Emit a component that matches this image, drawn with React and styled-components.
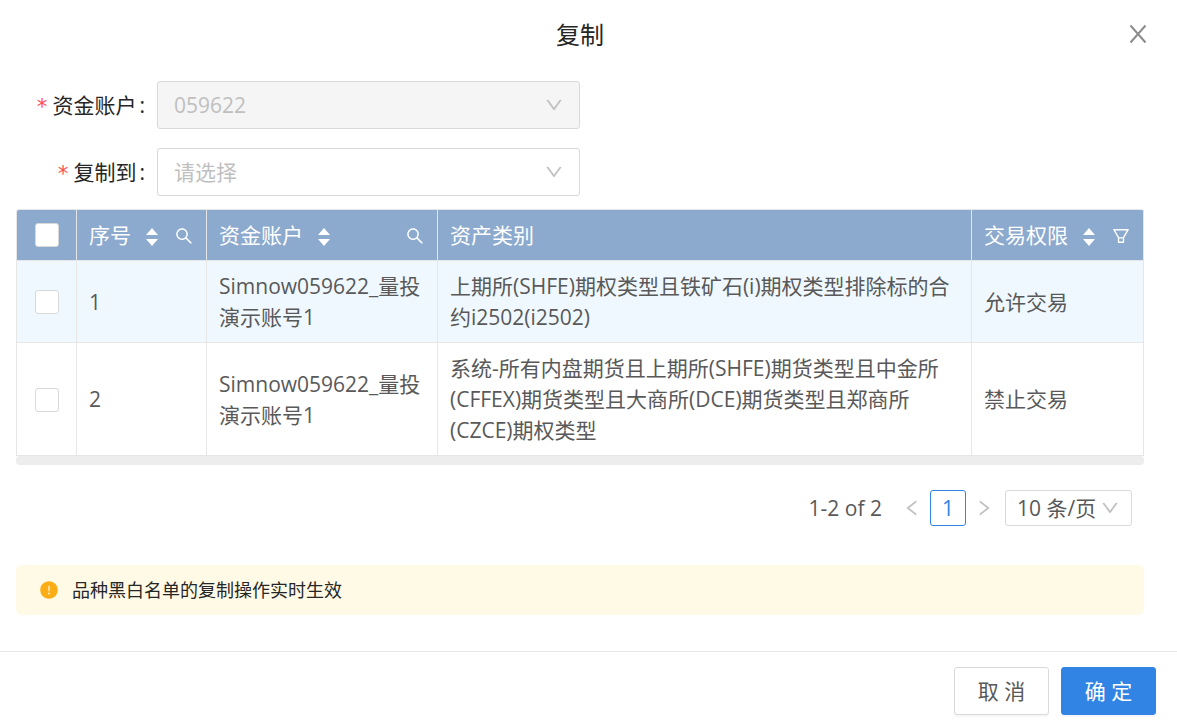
import { useState } from "react";
import styled, { createGlobalStyle } from "styled-components";
import {
  AiFillExclamationCircle,
  AiOutlineDown,
  AiOutlineFilter,
  AiOutlineLeft,
  AiOutlineRight,
  AiOutlineSearch,
} from "react-icons/ai";

const GlobalStyle = createGlobalStyle`
  * {
    box-sizing: border-box;
  }
  body {
    margin: 0;
    background: #fff;
    color: #595959;
    font-family: "Open Sans", "Noto Sans CJK SC", sans-serif;
    font-size: 21px;
    line-height: 31px;
  }
  button, select, input {
    font: inherit;
    color: inherit;
    margin: 0;
  }
`;

const Dialog = styled.div`
  position: relative;
  width: 100%;
`;

const Header = styled.header`
  display: flex;
  align-items: center;
  justify-content: center;
  height: 68px;
  padding: 0 33px 0 16px;
`;

const Title = styled.h1`
  margin: 0;
  font-size: 24px;
  font-weight: 400;
  color: #262626;
`;

const CloseButton = styled.button`
  position: absolute;
  top: 22px;
  right: 27px;
  display: flex;
  padding: 0;
  border: 0;
  background: none;
  color: #8c8c8c;
  cursor: pointer;
`;

const Body = styled.main`
  padding: 13px 33px 36px 16px;
`;

const Form = styled.form`
  display: flex;
  flex-direction: column;
  gap: 19px;
  margin-bottom: 13px;
`;

const FormItem = styled.div`
  display: grid;
  grid-template-columns: 12.5% 37.5%;
  align-items: center;
`;

const Label = styled.label`
  display: flex;
  align-items: center;
  justify-content: flex-end;
  color: #262626;
  white-space: nowrap;
`;

const Required = styled.span`
  margin-right: 4px;
  padding-top: 5px;
  color: #ff4d4f;
  font-family: "DejaVu Sans Mono", monospace;
`;

const Colon = styled.span`
  margin: 0 12px 0 3px;
`;

const SelectBox = styled.div`
  position: relative;
  height: ${(p) => (p.$small ? 36 : 48)}px;
  width: ${(p) => (p.$small ? "127px" : "100%")};
  svg {
    position: absolute;
    top: 50%;
    right: ${(p) => (p.$small ? 12 : 16)}px;
    transform: translateY(-50%);
    color: #bfbfbf;
    font-size: 20px;
    stroke-width: 14px;
    pointer-events: none;
  }
`;

const Select = styled.select`
  appearance: none;
  width: 100%;
  height: 100%;
  padding: 0 ${(p) => (p.$small ? 11 : 16)}px;
  border: 1px solid #d9d9d9;
  border-radius: 3px;
  background: #fff;
  color: ${(p) => (p.$placeholder ? "#bfbfbf" : "#595959")};
  cursor: pointer;
  &:disabled {
    background: #f5f5f5;
    color: #bfbfbf;
    opacity: 1;
    cursor: not-allowed;
  }
`;

const TableWrap = styled.div`
  border: solid #e6e6e6;
  border-width: 1px 0 0 1px;
  border-radius: 3px 3px 0 0;
  overflow: hidden;
`;

const Table = styled.table`
  width: 100%;
  table-layout: fixed;
  border-collapse: separate;
  border-spacing: 0;
`;

const Col = styled.col`
  width: ${(p) => p.$width};
`;

const Th = styled.th`
  height: 51px;
  padding: 0 12px;
  border-right: 1px solid #e6e6e6;
  border-bottom: 1px solid #e6e6e6;
  background: #8ca9ce;
  color: #fff;
  font-weight: 400;
  text-align: left;
  white-space: nowrap;
`;

const HeadCell = styled.div`
  display: flex;
  align-items: center;
`;

const SortButton = styled.button`
  display: flex;
  margin: 3px 0 0 15px;
  padding: 0;
  border: 0;
  background: none;
  cursor: pointer;
`;

const HeadIconButton = styled.button`
  display: flex;
  margin: 2px 0 0 auto;
  padding: 0;
  border: 0;
  background: none;
  font-size: 20px;
  cursor: pointer;
`;

const Row = styled.tr`
  background: ${(p) => (p.$active ? "#f0f8ff" : "#fff")};
`;

const Td = styled.td`
  padding: 10px 12px 9px;
  border-right: 1px solid #e6e6e6;
  border-bottom: 1px solid #e6e6e6;
  vertical-align: middle;
`;

const Checkbox = styled.input`
  appearance: none;
  display: block;
  width: 24px;
  height: 24px;
  margin: 0 auto;
  border: 1px solid #d9d9d9;
  border-radius: 3px;
  background: #fff;
  cursor: pointer;
  &:checked {
    border-color: #3284e4;
    background: #3284e4;
  }
`;

const ScrollTrack = styled.div`
  height: 9px;
  border-radius: 4px;
  background: #ededed;
`;

const Pagination = styled.nav`
  display: flex;
  align-items: center;
  justify-content: flex-end;
  margin: 25px 12px 39px 0;
`;

const Total = styled.span`
  margin-right: 12px;
`;

const PageButton = styled.button`
  display: flex;
  align-items: center;
  justify-content: center;
  width: 36px;
  height: 36px;
  padding: 0;
  border: 1px solid ${(p) => (p.$active ? "#3284e4" : "transparent")};
  border-radius: 3px;
  background: #fff;
  color: ${(p) => (p.$active ? "#3284e4" : "#bfbfbf")};
  cursor: pointer;
  svg {
    font-size: 20px;
    stroke-width: 14px;
  }
`;

const PageSize = styled.div`
  margin-left: 3px;
`;

const Alert = styled.div`
  display: flex;
  align-items: center;
  gap: 13px;
  height: 50px;
  padding: 0 23px;
  border-radius: 6px;
  background: #fffae6;
  color: #262626;
  font-size: 18px;
  svg {
    color: #faad14;
    font-size: 20px;
  }
`;

const Footer = styled.footer`
  display: flex;
  justify-content: flex-end;
  gap: 12px;
  padding: 15px 21px 9px;
  border-top: 1px solid #e6e6e6;
`;

const Button = styled.button`
  width: 95px;
  height: 48px;
  padding: 0;
  border: 1px solid ${(p) => (p.$primary ? "#3284e4" : "#d9d9d9")};
  border-radius: 3px;
  background: ${(p) => (p.$primary ? "#3284e4" : "#fff")};
  color: ${(p) => (p.$primary ? "#fff" : "#595959")};
  box-shadow: 0 2px 0 rgba(0, 0, 0, 0.03);
  cursor: pointer;
`;

const columns = [
  { title: "序号", width: "130px", sorter: true, icon: "search" },
  { title: "资金账户", width: "231px", sorter: true, icon: "search" },
  { title: "资产类别", width: "auto" },
  { title: "交易权限", width: "172px", sorter: true, icon: "filter" },
];

const rows = [
  {
    id: 1,
    account: "Simnow059622_量投演示账号1",
    category: "上期所(SHFE)期权类型且铁矿石(i)期权类型排除标的合约i2502(i2502)",
    permission: "允许交易",
  },
  {
    id: 2,
    account: "Simnow059622_量投演示账号1",
    category:
      "系统-所有内盘期货且上期所(SHFE)期货类型且中金所(CFFEX)期货类型且大商所(DCE)期货类型且郑商所(CZCE)期权类型",
    permission: "禁止交易",
  },
];

const CloseIcon = () => (
  <svg width="24" height="24" viewBox="0 0 24 24" stroke="currentColor">
    <path d="M4.5 3.5l15 17M19.5 3.5l-15 17" fill="none" strokeWidth="2" />
  </svg>
);

const Sorter = () => (
  <SortButton type="button" aria-label="排序">
    <svg width="12" height="18" viewBox="0 0 12 18" fill="currentColor">
      <path d="M6 0 12 7H0z" />
      <path d="M0 11h12l-6 7z" />
    </svg>
  </SortButton>
);

const App = () => {
  const [selected, setSelected] = useState([]);
  const [target, setTarget] = useState("");

  function toggle(id) {
    setSelected(
      selected.includes(id)
        ? selected.filter((item) => item !== id)
        : [...selected, id]
    );
  }

  function toggleAll() {
    setSelected(selected.length === rows.length ? [] : rows.map((r) => r.id));
  }

  return (
    <>
      <GlobalStyle />
      <Dialog role="dialog" aria-labelledby="title">
        <Header>
          <Title id="title">复制</Title>
          <CloseButton type="button" aria-label="关闭">
            <CloseIcon />
          </CloseButton>
        </Header>
        <Body>
          <Form>
            <FormItem>
              <Label htmlFor="source">
                <Required>*</Required>资金账户<Colon>:</Colon>
              </Label>
              <SelectBox>
                <Select id="source" disabled defaultValue="059622">
                  <option value="059622">059622</option>
                </Select>
                <AiOutlineDown />
              </SelectBox>
            </FormItem>
            <FormItem>
              <Label htmlFor="target">
                <Required>*</Required>复制到<Colon>:</Colon>
              </Label>
              <SelectBox>
                <Select
                  id="target"
                  value={target}
                  $placeholder={target === ""}
                  onChange={(e) => setTarget(e.target.value)}
                >
                  <option value="">请选择</option>
                </Select>
                <AiOutlineDown />
              </SelectBox>
            </FormItem>
          </Form>
          <TableWrap>
            <Table>
              <colgroup>
                <Col $width="60px" />
                {columns.map((col) => (
                  <Col key={col.title} $width={col.width} />
                ))}
              </colgroup>
              <thead>
                <tr>
                  <Th>
                    <Checkbox
                      type="checkbox"
                      aria-label="全选"
                      checked={selected.length === rows.length}
                      onChange={toggleAll}
                    />
                  </Th>
                  {columns.map((col) => (
                    <Th key={col.title}>
                      <HeadCell>
                        {col.title}
                        {col.sorter && <Sorter />}
                        {col.icon === "search" && (
                          <HeadIconButton type="button" aria-label="搜索">
                            <AiOutlineSearch />
                          </HeadIconButton>
                        )}
                        {col.icon === "filter" && (
                          <HeadIconButton type="button" aria-label="筛选">
                            <AiOutlineFilter />
                          </HeadIconButton>
                        )}
                      </HeadCell>
                    </Th>
                  ))}
                </tr>
              </thead>
              <tbody>
                {rows.map((row, i) => (
                  <Row key={row.id} $active={i % 2 === 0}>
                    <Td>
                      <Checkbox
                        type="checkbox"
                        aria-label={`选择 ${row.id}`}
                        checked={selected.includes(row.id)}
                        onChange={() => toggle(row.id)}
                      />
                    </Td>
                    <Td>{row.id}</Td>
                    <Td>{row.account}</Td>
                    <Td>{row.category}</Td>
                    <Td>{row.permission}</Td>
                  </Row>
                ))}
              </tbody>
            </Table>
          </TableWrap>
          <ScrollTrack />
          <Pagination>
            <Total>1-2 of 2</Total>
            <PageButton type="button" aria-label="上一页">
              <AiOutlineLeft />
            </PageButton>
            <PageButton type="button" $active>
              1
            </PageButton>
            <PageButton type="button" aria-label="下一页">
              <AiOutlineRight />
            </PageButton>
            <PageSize>
              <SelectBox $small>
                <Select $small aria-label="每页条数" defaultValue="10">
                  <option value="10">10 条/页</option>
                </Select>
                <AiOutlineDown />
              </SelectBox>
            </PageSize>
          </Pagination>
          <Alert role="alert">
            <AiFillExclamationCircle />
            品种黑白名单的复制操作实时生效
          </Alert>
        </Body>
        <Footer>
          <Button type="button">取 消</Button>
          <Button type="button" $primary>
            确 定
          </Button>
        </Footer>
      </Dialog>
    </>
  );
};

export default App;
